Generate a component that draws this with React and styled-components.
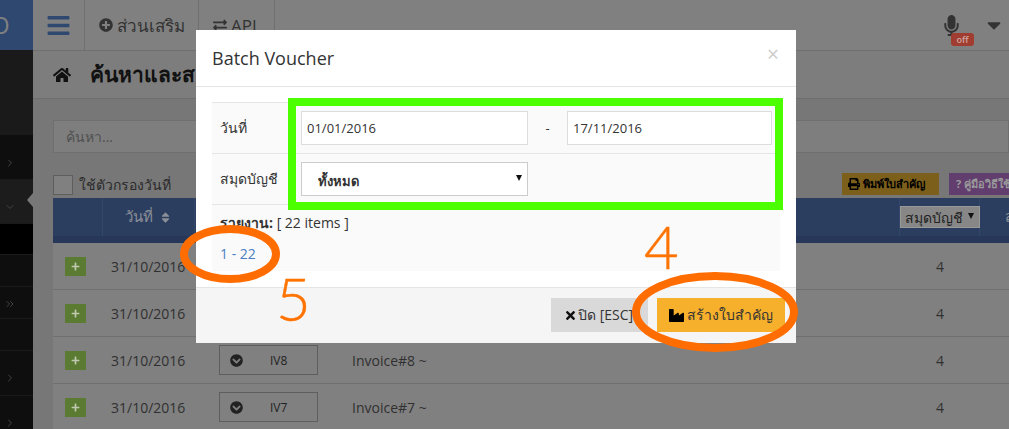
import React from "react";
import styled, { createGlobalStyle } from "styled-components";
import {
  FaBars,
  FaPlusCircle,
  FaExchangeAlt,
  FaHome,
  FaSort,
  FaPlus,
  FaChevronCircleDown,
  FaPrint,
  FaTimes,
  FaIndustry,
  FaMicrophone,
  FaCaretDown,
} from "react-icons/fa";
import { ChevronRight, ChevronDown, ChevronsRight } from "lucide-react";

const rows = [
  { id: "r1", date: "31/10/2016" },
  { id: "r2", date: "31/10/2016" },
  { id: "IV8", date: "31/10/2016", doc: "IV8", text: "Invoice#8 ~" },
  { id: "IV7", date: "31/10/2016", doc: "IV7", text: "Invoice#7 ~" },
];

const sideItems = [
  { h: 85, bg: "#1a1a1a" },
  { h: 45, bg: "#0e0e0e", pad: 12, icon: <ChevronRight size={12} /> },
  { h: 44, bg: "#1c1c1c", pad: 10, icon: <ChevronDown size={12} /> },
  { h: 31, bg: "#000" },
  { h: 32, bg: "#0e0e0e" },
  { h: 32, bg: "#0e0e0e", pad: 2, icon: <ChevronsRight size={12} /> },
  { h: 32, bg: "#0e0e0e" },
  { h: 45, bg: "#0e0e0e", pad: 10, icon: <ChevronRight size={12} /> },
  { h: 45, bg: "#0e0e0e", pad: 10, icon: <ChevronRight size={12} /> },
];

export default function App() {
  return (
    <>
      <GlobalStyle />
      <Shell>
        <Sidebar>
          <Brand>O</Brand>
          {sideItems.map((item, i) => (
            <SideItem key={i} $h={item.h} $bg={item.bg} $pad={item.pad}>
              {item.icon}
            </SideItem>
          ))}
          <SideNotch />
        </Sidebar>
        <Main>
          <TopBar>
            <BurgerCell>
              <FaBars />
            </BurgerCell>
            <TopCell $w={114}>
              <FaPlusCircle />
              ส่วนเสริม
            </TopCell>
            <TopCell $w={76}>
              <FaExchangeAlt />
              API
            </TopCell>
            <TopRight>
              <MicWrap>
                <FaMicrophone />
                <OffBadge>off</OffBadge>
              </MicWrap>
              <FaCaretDown />
            </TopRight>
          </TopBar>
          <TitleBar>
            <HomeIcon>
              <FaHome />
            </HomeIcon>
            <PageTitle>ค้นหาและส</PageTitle>
          </TitleBar>
          <Content>
            <SearchInput placeholder="ค้นหา..." readOnly />
            <FilterRow>
              <FilterCheck />
              <FilterLabel>ใช้ตัวกรองวันที่</FilterLabel>
              <PrintButton>
                <FaPrint />
                พิมพ์ใบสำคัญ
              </PrintButton>
              <HelpButton>? คู่มือวิธีใช้</HelpButton>
            </FilterRow>
            <TableHead>
              <HeadCell />
              <HeadCell>
                วันที่ <FaSort />
              </HeadCell>
              <HeadCell />
              <HeadCell />
              <HeadCell>
                <SelectBox $w={80} $h={22}>
                  <BookSelect defaultValue="book">
                    <option value="book">สมุดบัญชี</option>
                  </BookSelect>
                  <SelectCaret />
                </SelectBox>
              </HeadCell>
              <HeadCell>ส</HeadCell>
            </TableHead>
            {rows.map((row) => (
              <Row key={row.id}>
                <PlusCell>
                  <PlusButton>
                    <FaPlus />
                  </PlusButton>
                </PlusCell>
                <DateCell>{row.date}</DateCell>
                <DocCell>
                  {row.doc && (
                    <DocBox>
                      <FaChevronCircleDown />
                      <DocName>{row.doc}</DocName>
                    </DocBox>
                  )}
                </DocCell>
                <TextCell>{row.text}</TextCell>
                <BookCell>4</BookCell>
              </Row>
            ))}
          </Content>
        </Main>
      </Shell>

      <Modal>
        <ModalHeader>
          <ModalTitle>Batch Voucher</ModalTitle>
          <CloseX>×</CloseX>
        </ModalHeader>
        <ModalBody>
          <FormRow>
            <FormLabel>วันที่</FormLabel>
            <FormValue>
              <DateInput $w={227} defaultValue="01/01/2016" />
              <Dash>-</Dash>
              <DateInput $w={205} defaultValue="17/11/2016" />
            </FormValue>
          </FormRow>
          <FormRow>
            <FormLabel>สมุดบัญชี</FormLabel>
            <FormValue>
              <SelectBox $w={227} $h={34}>
                <AllSelect defaultValue="all">
                  <option value="all">ทั้งหมด</option>
                </AllSelect>
                <SelectCaret />
              </SelectBox>
            </FormValue>
          </FormRow>
          <ReportBox>
            <ReportLine>
              <b>รายงาน:</b> [ 22 items ]
            </ReportLine>
            <PageLink href="#">1 - 22</PageLink>
          </ReportBox>
        </ModalBody>
        <ModalFooter>
          <CloseButton>
            <FaTimes />
            ปิด [ESC]
          </CloseButton>
          <CreateButton>
            <FaIndustry />
            สร้างใบสำคัญ
          </CreateButton>
        </ModalFooter>
      </Modal>

      <GreenFrame />
      <Marks viewBox="0 0 1009 429">
        <ellipse cx="230" cy="254" rx="46" ry="25" />
        <ellipse cx="715" cy="312" rx="79" ry="36" />
      </Marks>
      <BigNumber $x={644} $y={206}>4</BigNumber>
      <BigNumber $x={276} $y={258}>5</BigNumber>
    </>
  );
}

const GlobalStyle = createGlobalStyle`
  html, body {
    margin: 0;
    padding: 0;
    height: 100%;
    overflow: hidden;
    background: #808080;
    font-family: "Open Sans", "Noto Sans", sans-serif;
    font-size: 14px;
    color: #2a2a2a;
  }
  * { box-sizing: border-box; }
`;

const Shell = styled.div`
  display: flex;
  width: 1009px;
  height: 429px;
  overflow: hidden;
`;

const Sidebar = styled.div`
  position: relative;
  flex: 0 0 33px;
  display: flex;
  flex-direction: column;
  background: #0e0e0e;
`;

const Brand = styled.div`
  height: 50px;
  flex: none;
  background: #2f4870;
  color: #808080;
  font-size: 24px;
  line-height: 50px;
  text-indent: -9px;
  overflow: hidden;
`;

const SideItem = styled.div`
  height: ${(p) => p.$h}px;
  flex: none;
  display: flex;
  align-items: center;
  padding: ${(p) => p.$pad || 0}px 0 0 4px;
  background: ${(p) => p.$bg};
  border-bottom: 1px solid #1a1a1a;
  color: #444;
`;

const SideNotch = styled.div`
  position: absolute;
  right: 0;
  top: 193px;
  border: 7px solid transparent;
  border-left-width: 0;
  border-right-width: 6px;
  border-right-color: #777;
`;

const Main = styled.div`
  flex: 1;
  min-width: 0;
  display: flex;
  flex-direction: column;
`;

const TopBar = styled.div`
  height: 51px;
  flex: none;
  display: flex;
  border-bottom: 1px solid #6f6f6f;
  background: #808080;
`;

const BurgerCell = styled.div`
  width: 52px;
  display: flex;
  align-items: center;
  justify-content: center;
  border-right: 1px solid #6f6f6f;
  color: #2f4870;
  font-size: 25px;
`;

const TopCell = styled.div`
  width: ${(p) => p.$w}px;
  display: flex;
  align-items: center;
  gap: 4px;
  padding-left: 14px;
  border-right: 1px solid #6f6f6f;
  color: #333;
  font-size: 17px;
  white-space: nowrap;
  svg {
    font-size: 14px;
  }
`;

const TopRight = styled.div`
  margin-left: auto;
  display: flex;
  align-items: center;
  gap: 21px;
  padding-right: 4px;
  color: #333;
  > svg {
    font-size: 22px;
  }
`;

const MicWrap = styled.div`
  position: relative;
  font-size: 21px;
  display: flex;
`;

const OffBadge = styled.span`
  position: absolute;
  left: 10px;
  top: 18px;
  width: 23px;
  height: 13px;
  border-radius: 3px;
  background: #a03c30;
  color: #d0a8a0;
  font-size: 9px;
  line-height: 13px;
  text-align: center;
  font-weight: 600;
`;

const TitleBar = styled.div`
  height: 48px;
  flex: none;
  display: flex;
  align-items: center;
  padding-left: 20px;
  border-bottom: 1px solid #6f6f6f;
  background: #7d7d7d;
`;

const HomeIcon = styled.div`
  display: flex;
  width: 37px;
  color: #111;
  font-size: 18px;
`;

const PageTitle = styled.h1`
  margin: 0;
  color: #111;
  font-size: 21px;
  font-weight: 600;
  white-space: nowrap;
`;

const Content = styled.div`
  flex: 1;
  padding: 21px 0 0 20px;
  background: #777;
`;

const SearchInput = styled.input`
  display: block;
  width: 100%;
  height: 33px;
  padding: 0 12px;
  border: 1px solid #6f6f6f;
  outline: 0;
  background: #7e7e7e;
  font: 14px "Open Sans", sans-serif;
  &::placeholder {
    color: #505050;
  }
`;

const FilterRow = styled.div`
  height: 45px;
  display: flex;
  align-items: flex-end;
  padding-bottom: 3px;
`;

const FilterCheck = styled.div`
  width: 20px;
  height: 20px;
  border: 1px solid #5e5e5e;
  background: #808080;
`;

const FilterLabel = styled.span`
  margin-left: 6px;
  color: #2a2a2a;
  font-size: 14px;
  line-height: 20px;
`;

const PrintButton = styled.div`
  margin-left: auto;
  height: 22px;
  width: 97px;
  flex: none;
  display: flex;
  align-items: center;
  gap: 3px;
  padding-left: 6px;
  background: #7d5f1c;
  color: #000;
  font-size: 11px;
  font-weight: 700;
  white-space: nowrap;
  svg {
    font-size: 12px;
  }
`;

const HelpButton = styled.div`
  margin-left: 10px;
  margin-right: -60px;
  height: 22px;
  width: 120px;
  flex: none;
  padding-left: 7px;
  background: #623e6e;
  color: #999;
  font-size: 11px;
  font-weight: 700;
  line-height: 22px;
  white-space: nowrap;
`;

const tableColumns = "50px 92px 145px 560px 80px 80px";

const TableHead = styled.div`
  display: grid;
  grid-template-columns: ${tableColumns};
  height: 45px;
  background: #2c3e5f;
  border-bottom: 7px solid #26375a;
  color: #8a8f98;
  font-size: 15px;
`;

const HeadCell = styled.div`
  display: flex;
  align-items: center;
  justify-content: center;
  gap: 6px;
  border-right: 1px solid #33476b;
  white-space: nowrap;
  &:last-child {
    justify-content: flex-start;
    padding-left: 25px;
  }
  svg {
    font-size: 13px;
  }
`;

const SelectBox = styled.div`
  position: relative;
  width: ${(p) => p.$w}px;
  height: ${(p) => p.$h}px;
  flex: none;
`;

const SelectCaret = styled.span`
  position: absolute;
  right: 6px;
  top: 50%;
  margin-top: -4px;
  border-left: 3.5px solid transparent;
  border-right: 3.5px solid transparent;
  border-top: 6px solid #111;
  pointer-events: none;
`;

const BookSelect = styled.select`
  display: block;
  width: 100%;
  height: 100%;
  padding: 0 4px;
  appearance: none;
  border: 1px solid #999;
  border-radius: 0;
  background: #878787;
  color: #222;
  font: 14px "Open Sans", sans-serif;
`;

const Row = styled.div`
  display: grid;
  grid-template-columns: ${tableColumns};
  height: 47px;
  align-items: center;
  border-bottom: 1px solid #6f6f6f;
  background: #808080;
  color: #303030;
  font-size: 14px;
`;

const PlusCell = styled.div`
  padding-left: 12px;
`;

const PlusButton = styled.div`
  width: 21px;
  height: 19px;
  display: flex;
  align-items: center;
  justify-content: center;
  background: #5b7b33;
  color: #c0c8b0;
  font-size: 9px;
`;

const DateCell = styled.div`
  padding-left: 8px;
  white-space: nowrap;
`;

const DocCell = styled.div`
  padding-left: 24px;
`;

const DocBox = styled.div`
  width: 99px;
  height: 30px;
  display: flex;
  align-items: center;
  padding-left: 10px;
  border: 1px solid #5e5e5e;
  color: #222;
  font-size: 13px;
`;

const DocName = styled.span`
  margin-left: 27px;
  font-size: 12px;
`;

const TextCell = styled.div`
  padding-left: 12px;
`;

const BookCell = styled.div`
  text-align: center;
`;

const Modal = styled.div`
  position: fixed;
  left: 196px;
  top: 30px;
  width: 600px;
  height: 312px;
  display: flex;
  flex-direction: column;
  background: #fff;
  color: #333;
`;

const ModalHeader = styled.div`
  height: 57px;
  flex: none;
  display: flex;
  align-items: center;
  justify-content: space-between;
  padding: 0 17px 0 16px;
  border-bottom: 1px solid #e5e5e5;
`;

const ModalTitle = styled.h4`
  margin: 0;
  color: #333;
  font-size: 18px;
  font-weight: 400;
`;

const CloseX = styled.span`
  margin-top: -8px;
  color: #ccc;
  font-size: 21px;
  font-weight: 400;
`;

const ModalBody = styled.div`
  flex: 1;
  padding: 15px 16px 16px;
`;

const FormRow = styled.div`
  display: flex;
  height: 51px;
  align-items: center;
  border-top: 1px solid #e5e5e5;
  background: #fafafa;
`;

const FormLabel = styled.div`
  width: 89px;
  padding-left: 8px;
  font-size: 14px;
`;

const FormValue = styled.div`
  display: flex;
  align-items: center;
`;

const DateInput = styled.input`
  width: ${(p) => p.$w}px;
  height: 34px;
  padding: 0 5px;
  border: 1px solid #ddd;
  outline: 0;
  background: #fff;
  color: #333;
  font: 13px "Open Sans", sans-serif;
`;

const Dash = styled.span`
  width: 39px;
  text-align: center;
  font-size: 13px;
`;

const AllSelect = styled.select`
  display: block;
  width: 100%;
  height: 100%;
  padding: 4px 0 0 16px;
  appearance: none;
  border: 1px solid #ccc;
  border-radius: 0;
  background: #fff;
  color: #333;
  font: 600 13px "Open Sans", sans-serif;
`;

const ReportBox = styled.div`
  height: 67px;
  padding: 8px 8px 0;
  border-top: 1px solid #e5e5e5;
  background: #fafafa;
  font-size: 14px;
`;

const ReportLine = styled.div`
  height: 31px;
  line-height: 20px;
`;

const PageLink = styled.a`
  color: #4a7ec4;
  text-decoration: none;
  line-height: 20px;
`;

const ModalFooter = styled.div`
  height: 56px;
  flex: none;
  display: flex;
  align-items: flex-start;
  justify-content: flex-end;
  gap: 9px;
  padding: 10px 11px 0 0;
  border-top: 1px solid #e5e5e5;
  background: #f5f5f5;
`;

const FooterButton = styled.div`
  height: 34px;
  display: flex;
  align-items: center;
  gap: 3px;
  color: #333;
  font-size: 14px;
  white-space: nowrap;
`;

const CloseButton = styled(FooterButton)`
  width: 97px;
  padding-left: 13px;
  gap: 1px;
  background: #d9d9d9;
  svg {
    color: #111;
    font-size: 13px;
  }
`;

const CreateButton = styled(FooterButton)`
  width: 128px;
  padding-left: 12px;
  background: #f7b02b;
  svg {
    color: #000;
    font-size: 15px;
  }
`;

const GreenFrame = styled.div`
  position: fixed;
  left: 288px;
  top: 98px;
  width: 495px;
  height: 112px;
  border: 8px solid #4cff00;
`;

const Marks = styled.svg`
  position: fixed;
  inset: 0;
  width: 1009px;
  height: 429px;
  pointer-events: none;
  ellipse {
    fill: none;
    stroke: #ff6d00;
    stroke-width: 8;
  }
`;

const BigNumber = styled.span`
  position: fixed;
  left: ${(p) => p.$x}px;
  top: ${(p) => p.$y}px;
  color: #ff7300;
  font-family: "Lato", sans-serif;
  font-size: 60px;
  font-weight: 300;
  -webkit-text-stroke: 0.4px #ff7300;
  line-height: 80px;
`;
